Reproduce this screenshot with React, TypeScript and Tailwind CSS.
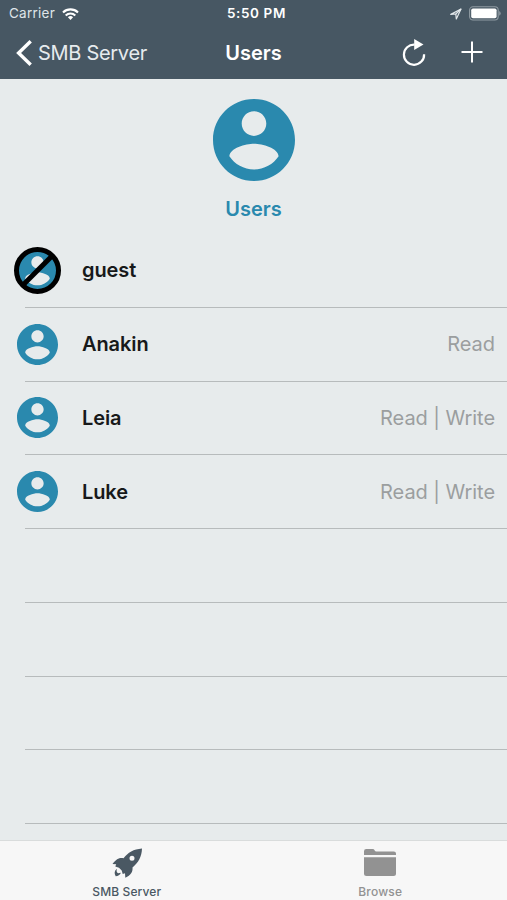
import { clsx } from 'clsx';

interface User {
    name: string;
    access?: string;
    disabled?: boolean;
}

const users: User[] = [
    { name: 'guest', disabled: true },
    { name: 'Anakin', access: 'Read' },
    { name: 'Leia', access: 'Read | Write' },
    { name: 'Luke', access: 'Read | Write' },
];

const EMPTY_ROWS = 4;

function AccountIcon({ className }: { className?: string }) {
    return (
        <svg viewBox="2 2 20 20" fill="currentColor" className={clsx('shrink-0 text-[#2a89ae]', className)}>
            <path d="M12 2C6.48 2 2 6.48 2 12s4.48 10 10 10 10-4.48 10-10S17.52 2 12 2zm0 3c1.66 0 3 1.34 3 3s-1.34 3-3 3-3-1.34-3-3 1.34-3 3-3zm0 14.2c-2.5 0-4.71-1.28-6-3.22.03-1.99 4-3.08 6-3.08 1.99 0 5.97 1.09 6 3.08-1.29 1.94-3.5 3.22-6 3.22z" />
        </svg>
    );
}

function StatusBar() {
    return (
        <div className="grid h-[27px] grid-cols-[1fr_auto_1fr] items-center pr-[6px] pl-[9px] text-[13.5px] leading-none">
            <div className="flex items-center gap-[7px]">
                <span className="tracking-[0.25px] text-[#dfe5e9]">Carrier</span>
                <svg width="17" height="12" viewBox="0 0 17 12" fill="none" stroke="#fff" strokeWidth="2.1">
                    <path d="M1 4.4a10.8 10.8 0 0 1 15 0" />
                    <path d="M3.7 7.4a6.9 6.9 0 0 1 9.6 0" />
                    <path d="M8.5 12 5.9 9.3a3.8 3.8 0 0 1 5.2 0z" fill="#fff" stroke="none" />
                </svg>
            </div>
            <span className="pl-[3px] font-semibold tracking-[0.6px]">5:50 PM</span>
            <div className="flex items-center justify-end gap-[7px]">
                <svg width="12" height="12" viewBox="0 0 12 12" fill="none" stroke="#e3e8eb" strokeWidth="1.2" strokeLinejoin="round">
                    <path d="M11 1 .8 6.4l5-.4.5 5z" />
                    <path d="M11 1 5.800 6" />
                </svg>
                <svg width="32" height="15" viewBox="0 0 32 15">
                    <rect x=".6" y=".8" width="28.6" height="13.2" rx="3.4" fill="none" stroke="#909ba3" strokeWidth="1.1" />
                    <rect x="2.2" y="2.5" width="25.4" height="9.8" rx="1.8" fill="#fff" />
                    <path d="M30.2 5v4.8q1.5-.9 1.5-2.4T30.2 5z" fill="#909ba3" />
                </svg>
            </div>
        </div>
    );
}

function NavBar() {
    return (
        <div className="grid h-[52px] grid-cols-[1fr_auto_1fr] items-center pr-[23px] pl-[16px] text-[20px] leading-none">
            <div className="flex items-center gap-[6px]">
                <svg width="16" height="26" viewBox="0 0 16 26" fill="none" stroke="#fff" strokeWidth="3.4">
                    <path d="M14.7 1.3 2.6 13l12.1 11.7" />
                </svg>
                <span className="tracking-[-0.3px] whitespace-nowrap text-[#e6ebee]">SMB Server</span>
            </div>
            <h1 className="pl-[7px] font-semibold">Users</h1>
            <div className="flex items-center justify-end gap-[35px]">
                <svg width="24" height="28" viewBox="0 0 24 28" fill="none" stroke="#fff" strokeWidth="2.2" className="relative -left-px">
                    <path d="M12.6 5.6A10.1 10.1 0 1 0 22.1 15.2" />
                    <path d="M12.2 0v11L21.500 5.400z" fill="#fff" stroke="none" />
                </svg>
                <svg width="22" height="22" viewBox="0 0 22 22" stroke="#fff" strokeWidth="2" className="relative -top-px -left-px">
                    <path d="M11 .5v21M.5 11h21" />
                </svg>
            </div>
        </div>
    );
}

function UserAvatar({ disabled }: { disabled?: boolean }) {
    return (
        <div className="relative flex size-[47px] shrink-0 items-center justify-center">
            <AccountIcon className="size-[41px]" />
            {disabled && (
                <svg viewBox="0 0 47 47" fill="none" stroke="#000" strokeWidth="5" className="absolute inset-0">
                    <circle cx="23.5" cy="23.5" r="21" />
                    <path d="M8.5 38.5l30-30" />
                </svg>
            )}
        </div>
    );
}

function UserRow({ user }: { user?: User }) {
    return (
        <li className="flex h-[73.75px] flex-col">
            <div className="flex flex-1 items-center pr-[12px] pl-[14px] text-[20px]">
                {user && (
                    <>
                        <UserAvatar disabled={user.disabled} />
                        <span className="ml-[21px] font-semibold tracking-[-0.1px] text-[#17191a]">{user.name}</span>
                        <span className="ml-auto tracking-[-0.05px] text-[#9b9e9f]">{user.access}</span>
                    </>
                )}
            </div>
            <div className="ml-[25px] h-px shrink-0 bg-[#b7bbbc]" />
        </li>
    );
}

function TabBar() {
    return (
        <nav className="grid h-[60px] shrink-0 grid-cols-2 border-t border-[#d9dcdc] bg-[#f7f7f7] text-[12px] leading-none font-medium">
            <div className="flex flex-col items-center pt-[6px] text-[#4a5863]">
                <svg width="32" height="32" viewBox="0 0 32 32" fill="currentColor">
                    <path
                        d="M31 1.500C22.500 2.200 17 5.500 12.500 11.200 9 10.400 5.500 11.500 1.500 17l3.700.3-.9 2.200 3.700 1.300 2.700 2.700 1 3.600 2.300-.8.300 4.400c5.500-2.500 7.700-6 7.200-10.200C27.500 15.500 30.700 9.500 31 1.500zM21 8.700a2.500 2.500 0 1 1 0 5 2.500 2.500 0 0 1 0-5z"
                        fillRule="evenodd"
                    />
                    <path d="M6 21.800c-2.700 2-3 4.600-1.300 7.400 2.300-.2 4.300-1.300 5.200-3.500l-2.800.6c-1.500-.9-1.900-2.500-1.100-4.500z" />
                </svg>
                <span className="mt-[7px] tracking-[0.1px]">SMB Server</span>
            </div>
            <div className="flex flex-col items-center pt-[6px] text-[#929292]">
                <svg width="32" height="32" viewBox="0 0 32 32" fill="currentColor">
                    <path d="M0 8V4.200Q0 2 2.200 2h6.300q1.700 0 2.200 1.400.4 1.100 1.700 1.100h17.400Q32 4.500 32 6.600V8z" />
                    <path d="M0 10.200h32v16.300q0 2.500-2.500 2.500h-27Q0 29 0 26.500z" />
                </svg>
                <span className="mt-[7px] tracking-[0.2px]">Browse</span>
            </div>
        </nav>
    );
}

export default function App() {
    return (
        <div className="flex h-[900px] w-[507px] flex-col overflow-hidden bg-[#e7ebec] font-['Inter','Liberation_Sans',sans-serif]">
            <header className="h-[79px] shrink-0 bg-[#475763] text-white">
                <StatusBar />
                <NavBar />
            </header>

            <main className="min-h-0 flex-1 overflow-hidden">
                <section className="flex h-[155px] flex-col items-center pt-[20px]">
                    <AccountIcon className="size-[82px]" />
                    <h2 className="mt-[13px] text-[20px] font-semibold text-[#2a89ae]">Users</h2>
                </section>

                <ul>
                    {users.map((user) => (
                        <UserRow key={user.name} user={user} />
                    ))}
                    {Array.from({ length: EMPTY_ROWS }, (_, i) => (
                        <UserRow key={i} />
                    ))}
                </ul>
            </main>

            <TabBar />
        </div>
    );
}
